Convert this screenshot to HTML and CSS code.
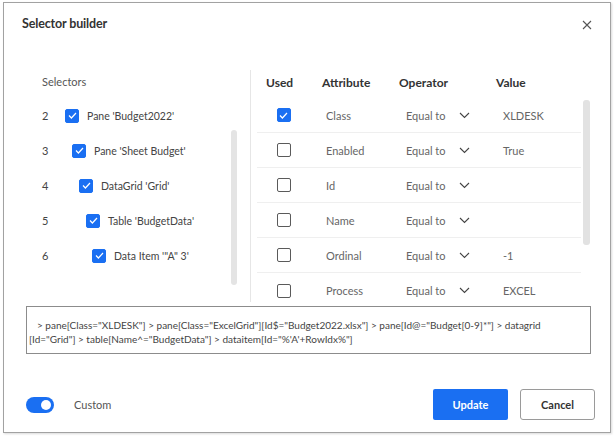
FILE: index.html
```html
<!DOCTYPE html>
<html>
<head>
<meta charset="utf-8">
<link rel="stylesheet" href="styles.css">
</head>
<body>
<div class="dialog">
  <div class="header">
    <div class="title">Selector builder</div>
    <svg class="close" width="10" height="10" viewBox="0 0 10 10"><path d="M1 1L9 9M9 1L1 9" stroke="#555" stroke-width="1.1" fill="none"/></svg>
  </div>
  <div class="main">
    <div class="left">
      <div class="left-list">
        <div class="left-label">Selectors</div>
        <div class="sel-row"><span class="num">2</span><span class="indent l0"></span><span class="cb on"><svg width="9" height="7" viewBox="0 0 9 7"><path d="M1 3.5L3.4 6L8 1" stroke="#fff" stroke-width="1.2" fill="none"/></svg></span><span class="sel-text">Pane 'Budget2022'</span></div>
        <div class="sel-row"><span class="num">3</span><span class="indent l1"></span><span class="cb on"><svg width="9" height="7" viewBox="0 0 9 7"><path d="M1 3.5L3.4 6L8 1" stroke="#fff" stroke-width="1.2" fill="none"/></svg></span><span class="sel-text">Pane 'Sheet Budget'</span></div>
        <div class="sel-row"><span class="num">4</span><span class="indent l2"></span><span class="cb on"><svg width="9" height="7" viewBox="0 0 9 7"><path d="M1 3.5L3.4 6L8 1" stroke="#fff" stroke-width="1.2" fill="none"/></svg></span><span class="sel-text">DataGrid 'Grid'</span></div>
        <div class="sel-row"><span class="num">5</span><span class="indent l3"></span><span class="cb on"><svg width="9" height="7" viewBox="0 0 9 7"><path d="M1 3.5L3.4 6L8 1" stroke="#fff" stroke-width="1.2" fill="none"/></svg></span><span class="sel-text">Table 'BudgetData'</span></div>
        <div class="sel-row"><span class="num">6</span><span class="indent l4"></span><span class="cb on"><svg width="9" height="7" viewBox="0 0 9 7"><path d="M1 3.5L3.4 6L8 1" stroke="#fff" stroke-width="1.2" fill="none"/></svg></span><span class="sel-text">Data Item '"A" 3'</span></div>
      </div>
      <div class="scroll-left"></div>
    </div>
    <div class="right">
      <div class="table">
        <div class="thead">
          <div class="h h-used">Used</div>
          <div class="h h-attr">Attribute</div>
          <div class="h h-op">Operator</div>
          <div class="h h-val">Value</div>
        </div>
        <div class="trow">
          <div class="c c-used"><span class="cb on"><svg width="9" height="7" viewBox="0 0 9 7"><path d="M1 3.5L3.4 6L8 1" stroke="#fff" stroke-width="1.2" fill="none"/></svg></span></div>
          <div class="c c-attr">Class</div>
          <div class="c c-op">Equal to<svg class="chev" width="11" height="7" viewBox="0 0 11 7"><path d="M1 1L5.5 5.5L10 1" stroke="#444" stroke-width="1.1" fill="none"/></svg></div>
          <div class="c c-val">XLDESK</div>
        </div>
        <div class="trow">
          <div class="c c-used"><span class="cb"></span></div>
          <div class="c c-attr">Enabled</div>
          <div class="c c-op">Equal to<svg class="chev" width="11" height="7" viewBox="0 0 11 7"><path d="M1 1L5.5 5.5L10 1" stroke="#444" stroke-width="1.1" fill="none"/></svg></div>
          <div class="c c-val">True</div>
        </div>
        <div class="trow">
          <div class="c c-used"><span class="cb"></span></div>
          <div class="c c-attr">Id</div>
          <div class="c c-op">Equal to<svg class="chev" width="11" height="7" viewBox="0 0 11 7"><path d="M1 1L5.5 5.5L10 1" stroke="#444" stroke-width="1.1" fill="none"/></svg></div>
          <div class="c c-val"></div>
        </div>
        <div class="trow">
          <div class="c c-used"><span class="cb"></span></div>
          <div class="c c-attr">Name</div>
          <div class="c c-op">Equal to<svg class="chev" width="11" height="7" viewBox="0 0 11 7"><path d="M1 1L5.5 5.5L10 1" stroke="#444" stroke-width="1.1" fill="none"/></svg></div>
          <div class="c c-val"></div>
        </div>
        <div class="trow">
          <div class="c c-used"><span class="cb"></span></div>
          <div class="c c-attr">Ordinal</div>
          <div class="c c-op">Equal to<svg class="chev" width="11" height="7" viewBox="0 0 11 7"><path d="M1 1L5.5 5.5L10 1" stroke="#444" stroke-width="1.1" fill="none"/></svg></div>
          <div class="c c-val">-1</div>
        </div>
        <div class="trow last">
          <div class="c c-used"><span class="cb"></span></div>
          <div class="c c-attr">Process</div>
          <div class="c c-op">Equal to<svg class="chev" width="11" height="7" viewBox="0 0 11 7"><path d="M1 1L5.5 5.5L10 1" stroke="#444" stroke-width="1.1" fill="none"/></svg></div>
          <div class="c c-val">EXCEL</div>
        </div>
      </div>
      <div class="scroll-right"></div>
    </div>
  </div>
  <div class="selector-box">
    <div class="line first">&gt; pane[Class="XLDESK"] &gt; pane[Class="ExcelGrid"][Id$="Budget2022.xlsx"] &gt; pane[Id@="Budget[0-9]*"] &gt; datagrid</div>
    <div class="line">[Id="Grid"] &gt; table[Name^="BudgetData"] &gt; dataitem[Id="%'A'+RowIdx%"]</div>
  </div>
  <div class="footer">
    <div class="toggle"><span class="knob"></span></div>
    <div class="custom">Custom</div>
    <div class="spacer"></div>
    <div class="btn primary">Update</div>
    <div class="btn secondary">Cancel</div>
  </div>
</div>
</body>
</html>
```

FILE: styles.css
```css
* { box-sizing: border-box; }
html, body { margin: 0; padding: 0; background: #fff; }
body {
  font-family: "Lato", "Open Sans", sans-serif;
  color: #333;
  width: 616px;
  height: 438px;
  overflow: hidden;
}
.dialog {
  margin: 2px 0 0 3px;
  width: 608px;
  height: 431px;
  border: 1px solid #a2a2a2;
  display: flex;
  flex-direction: column;
  box-shadow: 1px 1px 2px rgba(0,0,0,0.15);
}
.header {
  height: 67px;
  display: flex;
  align-items: flex-start;
  justify-content: space-between;
  padding: 11px 18px 0 18px;
}
.title {
  font-size: 12.5px;
  font-weight: 700;
  letter-spacing: -0.15px;
  color: #333;
  line-height: 20px;
}
.close { margin-top: 6px; }
.main {
  height: 232px;
  display: flex;
  overflow: hidden;
}
.left {
  width: 247px;
  border-right: 1px solid #e6e6e6;
  display: flex;
}
.left-list {
  width: 223px;
  padding-left: 38px;
}
.left-label {
  height: 28px;
  font-size: 11px;
  color: #555;
  padding-top: 5px;
}
.sel-row {
  height: 35px;
  display: flex;
  align-items: center;
  font-size: 10.5px;
  color: #444;
}
.num { width: 23px; color: #444; font-size: 11px; }
.indent.l0 { width: 0; }
.indent.l1 { width: 7px; }
.indent.l2 { width: 14px; }
.indent.l3 { width: 21px; }
.indent.l4 { width: 27px; }
.sel-text { margin-left: 8px; color: #444; }
.cb {
  width: 14px;
  height: 14px;
  border: 1.5px solid #5a5a5a;
  border-radius: 2px;
  display: flex;
  align-items: center;
  justify-content: center;
  flex: none;
}
.cb.on {
  background: #1a6ff2;
  border-color: #1a6ff2;
}
.scroll-left {
  width: 6px;
  height: 155px;
  margin-top: 60px;
  margin-left: 4px;
  background: #e4e4e4;
  border-radius: 3px;
}
.right {
  flex: 1;
  display: flex;
  padding-left: 6px;
}
.table { width: 324px; }
.thead {
  height: 28px;
  display: flex;
  font-size: 12px;
  font-weight: 700;
  color: #333;
  padding-top: 5px;
}
.h-used { width: 53px; padding-left: 9px; }
.h-attr { width: 80px; padding-left: 12px; }
.h-op { width: 95px; padding-left: 9px; }
.h-val { padding-left: 11px; }
.trow {
  height: 35px;
  display: flex;
  align-items: center;
  border-bottom: 1px solid #efefef;
  font-size: 11px;
  color: #666;
}
.trow.last { border-bottom: none; }
.c-used { width: 53px; display: flex; justify-content: center; }
.c-attr { width: 80px; padding-left: 16px; }
.c-op { width: 95px; padding-left: 16px; display: flex; align-items: center; }
.chev { margin-left: 14px; }
.c-val { padding-left: 18px; }
.scroll-right {
  width: 7px;
  height: 145px;
  margin-top: 30px;
  margin-left: 2px;
  background: #e2e2e2;
  border-radius: 3px;
}
.selector-box {
  margin: 4px 0 0 22px;
  width: 565px;
  height: 48px;
  border: 1px solid #8c8c8c;
  padding: 11px 2px 0 2px;
  font-size: 10px;
  color: #444;
  line-height: 14px;
}
.line { white-space: nowrap; }
.line.first { padding-left: 8px; }
.footer {
  margin-top: 35px;
  display: flex;
  align-items: center;
  padding: 0 15px 0 22px;
  height: 31px;
}
.toggle {
  width: 28px;
  height: 16px;
  border-radius: 8px;
  background: #1a6ff2;
  position: relative;
}
.knob {
  position: absolute;
  right: 3px;
  top: 3px;
  width: 10px;
  height: 10px;
  border-radius: 50%;
  background: #fff;
}
.custom {
  margin-left: 20px;
  font-size: 11px;
  color: #555;
}
.spacer { flex: 1; }
.btn {
  width: 75px;
  height: 31px;
  display: flex;
  align-items: center;
  justify-content: center;
  font-size: 11px;
  font-weight: 700;
  border-radius: 2px;
}
.btn.primary { background: #1a6ff2; color: #fff; }
.btn.secondary {
  margin-left: 12px;
  border: 1px solid #9a9a9a;
  color: #333;
  background: #fff;
  border-radius: 3px;
}
```
